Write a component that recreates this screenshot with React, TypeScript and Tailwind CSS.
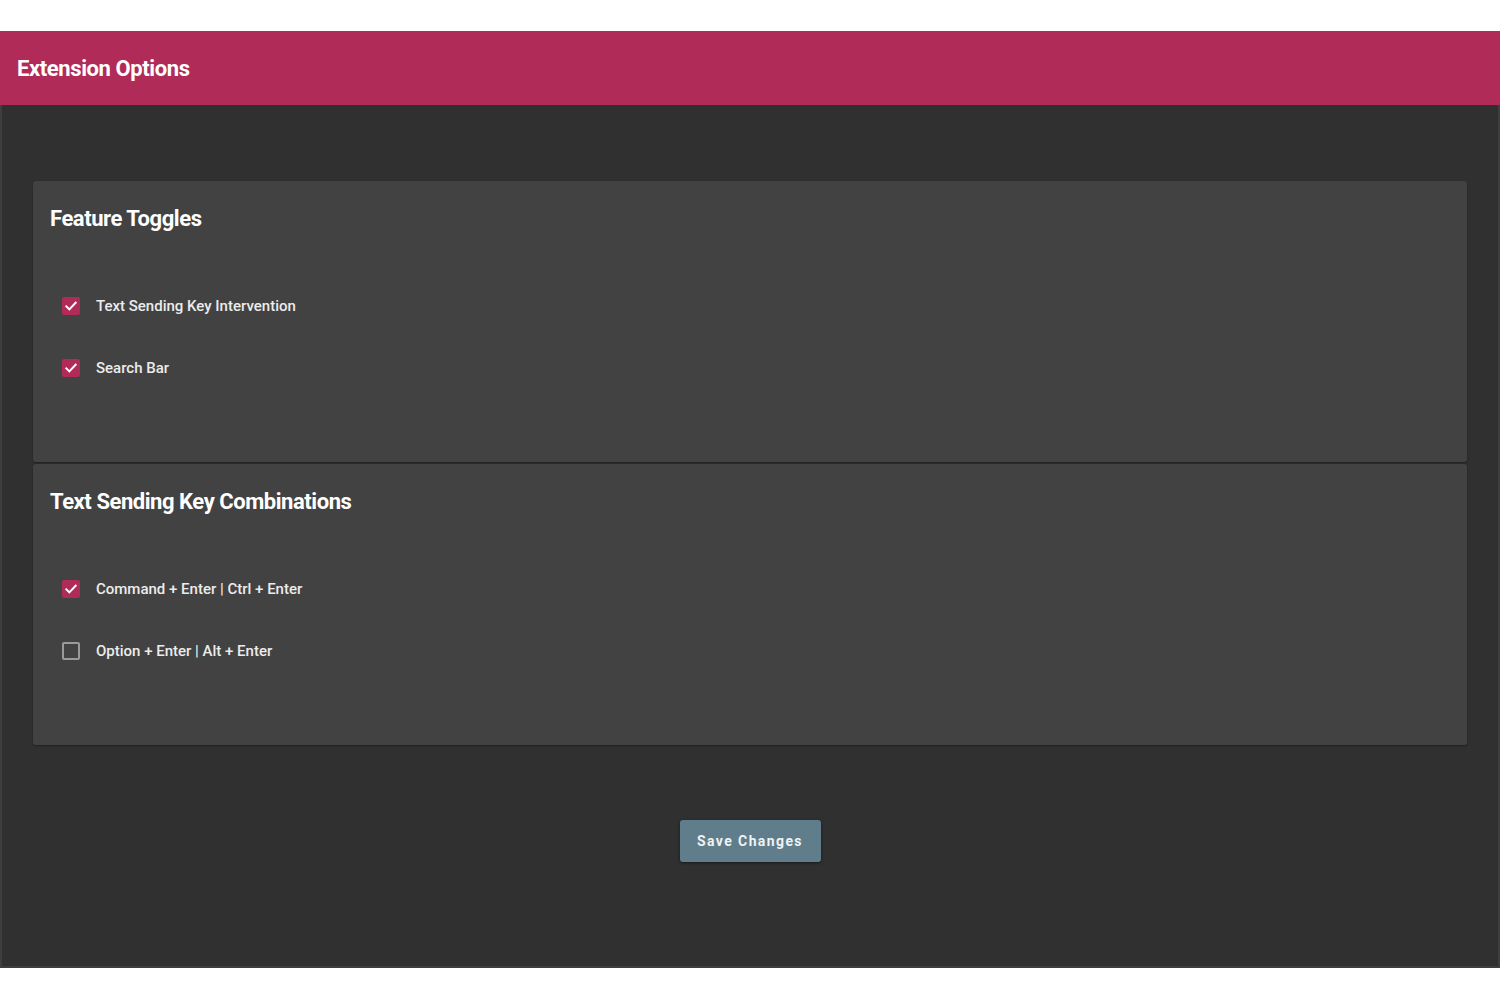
import React, { useState } from 'react';

interface Option {
	id: string;
	label: string;
	checked: boolean;
}

interface Section {
	title: string;
	options: Option[];
}

const INITIAL_SECTIONS: Section[] = [
	{
		title: 'Feature Toggles',
		options: [
			{ id: 'intervention', label: 'Text Sending Key Intervention', checked: true },
			{ id: 'searchbar', label: 'Search Bar', checked: true },
		],
	},
	{
		title: 'Text Sending Key Combinations',
		options: [
			{ id: 'cmd', label: 'Command + Enter | Ctrl + Enter', checked: true },
			{ id: 'opt', label: 'Option + Enter | Alt + Enter', checked: false },
		],
	},
];

const CheckBox: React.FC<{ checked: boolean; onClick: () => void }> = ({ checked, onClick }) => (
	<button
		type="button"
		onClick={onClick}
		className={
			checked
				? 'w-[18px] h-[18px] rounded-[2px] bg-[#b02b58] flex items-center justify-center'
				: 'w-[18px] h-[18px] rounded-[2px] border-2 border-[#9a9a9a] bg-transparent'
		}
	>
		{checked && (
			<svg viewBox="0 0 24 24" className="w-[16px] h-[16px]" fill="none">
				<path d="M5 12.5l4.5 4.5L19 7" stroke="#fff" strokeWidth="3" strokeLinecap="square" />
			</svg>
		)}
	</button>
);

export default function App() {
	const [sections, setSections] = useState<Section[]>(INITIAL_SECTIONS);

	const toggle = (si: number, id: string) => {
		setSections(prev =>
			prev.map((s, i) =>
				i !== si
					? s
					: { ...s, options: s.options.map(o => (o.id === id ? { ...o, checked: !o.checked } : o)) }
			)
		);
	};

	return (
		<div className="w-[1500px] h-[1000px] bg-white font-['Roboto',sans-serif]">
			<div className="mt-[31px] h-[937px] flex flex-col">
				{/* Header */}
				<div className="h-[74px] bg-[#b02b58] flex items-center px-[17px]">
					<h1 className="text-white text-[22px] font-bold tracking-[-0.4px]">Extension Options</h1>
				</div>

				{/* Body */}
				<div className="flex-1 bg-[#303030] border-x-2 border-b-2 border-[#3e3e3e] pt-[76px] px-[31px] flex flex-col">
					<div className="flex flex-col gap-[2px]">
						{sections.map((section, si) => (
							<div
								key={section.title}
								className="h-[281px] bg-[#424242] rounded-[3px] shadow-[0_1px_2px_rgba(0,0,0,0.35)] pt-[23px] px-[17px]"
							>
								<h2 className="text-white text-[22px] font-bold leading-[30px] tracking-[-0.45px]">
									{section.title}
								</h2>
								<div className="mt-[63px] ml-[12px] flex flex-col gap-[44px]">
									{section.options.map(opt => (
										<label key={opt.id} className="flex items-center h-[18px] gap-[16px] cursor-pointer">
											<CheckBox checked={opt.checked} onClick={() => toggle(si, opt.id)} />
											<span className="text-[#ececec] text-[15px] font-medium tracking-[0px]">
												{opt.label}
											</span>
										</label>
									))}
								</div>
							</div>
						))}
					</div>

					<div className="mt-[75px] flex justify-center">
						<button
							type="button"
							className="w-[141px] h-[42px] bg-[#607d8b] rounded-[3px] shadow-[0_1px_3px_rgba(0,0,0,0.5)] text-[#eef2f4] text-[14px] font-bold tracking-[1.4px]"
						>
							Save Changes
						</button>
					</div>
				</div>
			</div>
		</div>
	);
}
